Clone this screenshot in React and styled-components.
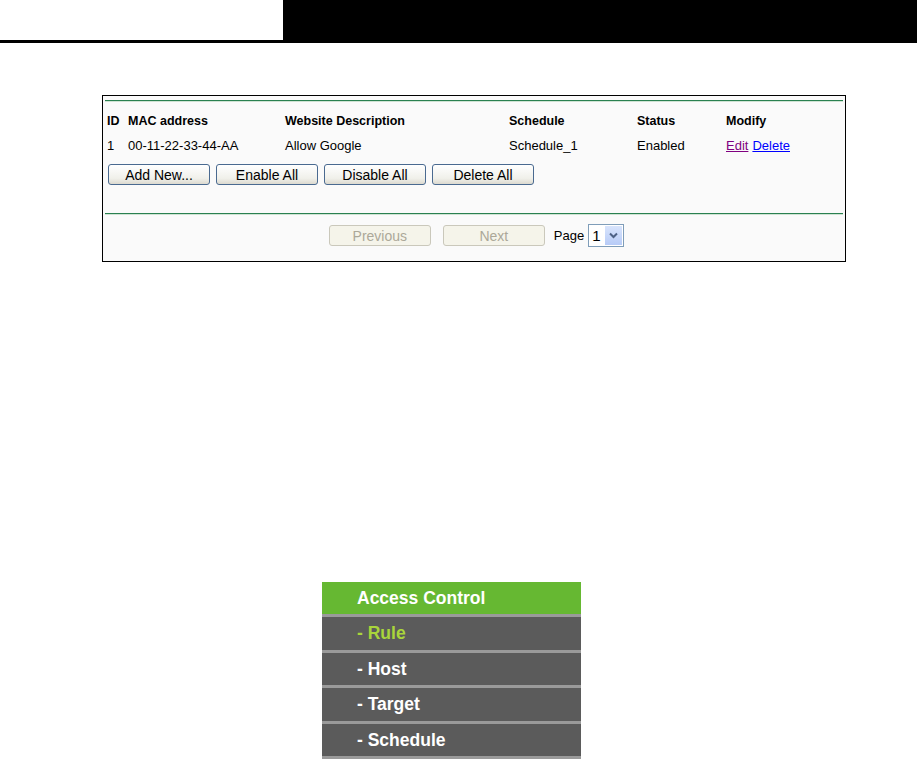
import React from "react"
import styled, { createGlobalStyle } from "styled-components"

const Global = createGlobalStyle`
  html, body { margin: 0; padding: 0; background: #fff; }
  body { font-family: "Liberation Sans", Arial, sans-serif; width: 917px; height: 761px; overflow: hidden; }
`

const Header = styled.div`
  display: flex;
  height: 40px;
  border-bottom: 3px solid #000;
`
const HeaderBlank = styled.div`
  width: 283px;
  background: #fff;
`
const HeaderBar = styled.div`
  flex: 1;
  background: #000;
`

const Panel = styled.div`
  margin: 52px 0 0 102px;
  width: 738px;
  border: 1px solid #000;
  background: #fafafa;
  padding: 4px 2px 0;
`
const Rule = styled.div`
  height: 1px;
  background: #2a8050;
  border-bottom: 1px solid #cfe3d3;
`
const Grid = styled.div`
  display: grid;
  grid-template-columns: 21px 157px 224px 128px 89px 1fr;
  padding: 8px 0 0 2px;
  font-size: 13px;
  color: #000;
`
const HeadCell = styled.div`
  height: 22px;
  line-height: 22px;
  font-weight: bold;
  font-size: 12.5px;
  white-space: nowrap;
`
const Cell = styled.div`
  height: 28px;
  line-height: 28px;
  white-space: nowrap;
`
const Link = styled.a`
  color: ${p => (p.$visited ? "#800080" : "#0000ff")};
  text-decoration: underline;
  margin-right: 4px;
  cursor: pointer;
`
const ButtonRow = styled.div`
  display: flex;
  gap: 6px;
  padding: 4px 0 0 3px;
  margin-bottom: 28px;
`
const Btn = styled.button`
  width: 102px;
  height: 21px;
  padding: 0;
  font-family: "Liberation Sans", Arial, sans-serif;
  font-size: 14px;
  color: #000;
  border: 1px solid #4a6a90;
  border-radius: 3px;
  background: linear-gradient(#ffffff, #f0f0ea 70%, #dcdad0);
`
const Pager = styled.div`
  display: flex;
  align-items: center;
  justify-content: center;
  padding: 9px 0 14px 5px;
  font-size: 13px;
`
const PageBtn = styled.button`
  width: 102px;
  height: 21px;
  padding: 0;
  margin-right: ${p => p.$mr || 0}px;
  font-family: "Liberation Sans", Arial, sans-serif;
  font-size: 14px;
  color: #aca899;
  border: 1px solid #cac8bb;
  border-radius: 3px;
  background: #f5f4ea;
`
const PageLabel = styled.span`
  margin-right: 4px;
`
const Select = styled.div`
  display: flex;
  align-items: stretch;
  width: 34px;
  height: 21px;
  border: 1px solid #7f9db9;
  background: #fff;
  font-size: 15px;
`
const SelectValue = styled.span`
  flex: 1;
  padding-left: 3px;
  line-height: 21px;
`
const SelectArrow = styled.span`
  width: 17px;
  margin: 1px;
  background: linear-gradient(#d8e4fc, #b7cbf7);
  display: flex;
  align-items: center;
  justify-content: center;
`

const Menu = styled.div`
  margin: 320px 0 0 322px;
  width: 259px;
  font-family: "Liberation Sans", Arial, sans-serif;
  font-weight: bold;
  font-size: 17.5px;
  border-bottom: 3px solid #9a9a9a;
`
const MenuTitle = styled.div`
  height: 32px;
  line-height: 32px;
  background: #66b832;
  color: #fff;
  padding-left: 35px;
`
const MenuItem = styled.div`
  height: 32.5px;
  line-height: 33px;
  border-top: 3.5px solid #9a9a9a;
  background: #5b5b5b;
  color: ${p => (p.$active ? "#a9d53b" : "#fff")};
  padding-left: 35px;
`

export default function App() {
  return (
    <>
      <Global />
      <Header>
        <HeaderBlank />
        <HeaderBar />
      </Header>
      <Panel>
        <Rule />
        <Grid>
          <HeadCell>ID</HeadCell>
          <HeadCell>MAC address</HeadCell>
          <HeadCell>Website Description</HeadCell>
          <HeadCell>Schedule</HeadCell>
          <HeadCell>Status</HeadCell>
          <HeadCell>Modify</HeadCell>
          <Cell>1</Cell>
          <Cell>00-11-22-33-44-AA</Cell>
          <Cell>Allow Google</Cell>
          <Cell>Schedule_1</Cell>
          <Cell>Enabled</Cell>
          <Cell>
            <Link $visited>Edit</Link>
            <Link>Delete</Link>
          </Cell>
        </Grid>
        <ButtonRow>
          <Btn>Add New...</Btn>
          <Btn>Enable All</Btn>
          <Btn>Disable All</Btn>
          <Btn>Delete All</Btn>
        </ButtonRow>
        <Rule />
        <Pager>
          <PageBtn $mr={12} disabled>Previous</PageBtn>
          <PageBtn $mr={9} disabled>Next</PageBtn>
          <PageLabel>Page</PageLabel>
          <Select>
            <SelectValue>1</SelectValue>
            <SelectArrow>
              <svg width="9" height="7" viewBox="0 0 9 7">
                <path d="M1 1.5 L4.5 5 L8 1.5" fill="none" stroke="#4d6185" strokeWidth="2" />
              </svg>
            </SelectArrow>
          </Select>
        </Pager>
      </Panel>
      <Menu>
        <MenuTitle>Access Control</MenuTitle>
        <MenuItem $active>- Rule</MenuItem>
        <MenuItem>- Host</MenuItem>
        <MenuItem>- Target</MenuItem>
        <MenuItem>- Schedule</MenuItem>
      </Menu>
    </>
  )
}
